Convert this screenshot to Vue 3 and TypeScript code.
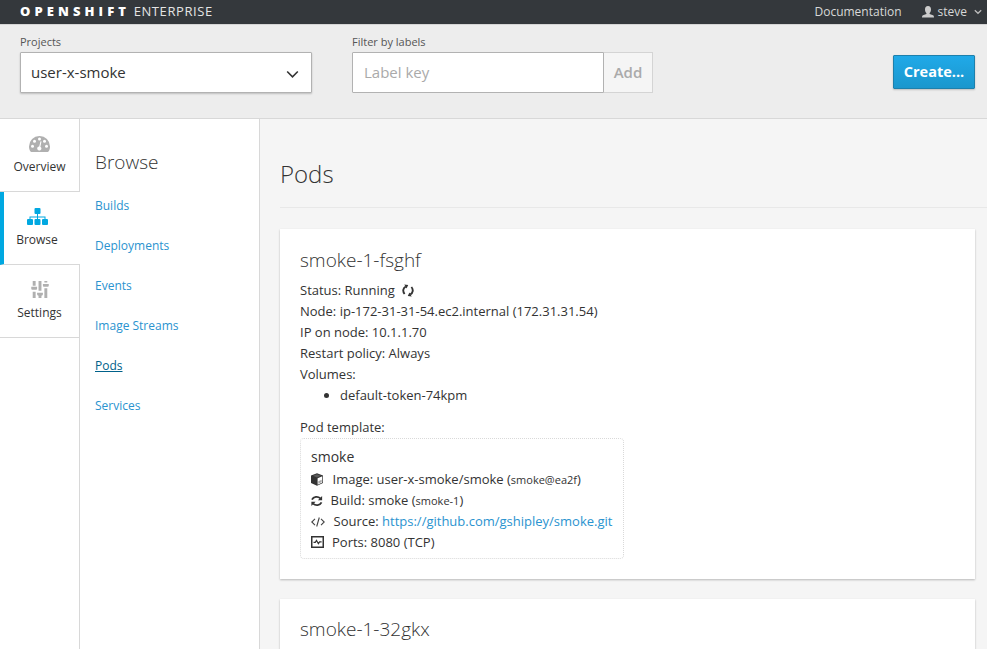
<script setup lang="ts">
interface NavItem {
  id: string
  label: string
}

const sections: NavItem[] = [
  { id: 'overview', label: 'Overview' },
  { id: 'browse', label: 'Browse' },
  { id: 'settings', label: 'Settings' },
]
const activeSection = 'browse'

const links: string[] = ['Builds', 'Deployments', 'Events', 'Image Streams', 'Pods', 'Services']
const activeLink = 'Pods'

const volumes: string[] = ['default-token-74kpm']
</script>

<template>
  <div class="console">
    <header class="topbar">
      <div class="brand"><strong>OPENSHIFT</strong><span>ENTERPRISE</span></div>
      <nav class="utility">
        <a class="docs">Documentation</a>
        <a class="user">
          <svg class="user-icon" viewBox="0 0 12 12" width="12" height="12">
            <path d="M6 0C3.900 0 3 1.400 3 3.400c0 1.800.7 2.900 1.400 3.600v1L1 9.300C.4 9.600 0 10.300 0 11.600h12c0-1.300-.4-2-1-2.300L7.600 8V7C8.300 6.300 9 5.200 9 3.400 9 1.400 8.100 0 6 0z" />
          </svg>
          <span>steve</span>
          <svg class="user-caret" viewBox="0 0 8 6" width="8" height="6">
            <path d="M.8 1.200 4 4.300l3.200-3.100" />
          </svg>
        </a>
      </nav>
    </header>

    <div class="toolbar">
      <div class="field projects">
        <label>Projects</label>
        <div class="select">
          <span>user-x-smoke</span>
          <svg viewBox="0 0 13 9" width="13" height="9"><path d="M1.200 1.500 6.500 6.800l5.300-5.300" /></svg>
        </div>
      </div>
      <div class="field filter">
        <label>Filter by labels</label>
        <div class="filter-row">
          <input type="text" placeholder="Label key" />
          <button class="add" disabled>Add</button>
        </div>
      </div>
      <button class="create">Create...</button>
    </div>

    <div class="body">
      <aside class="rail">
        <a v-for="s in sections" :key="s.id" class="rail-item" :class="{ active: s.id === activeSection }">
          <svg v-if="s.id === 'overview'" viewBox="0 0 21 16" width="21" height="16">
            <path fill="currentColor" d="M10.500 0A10.400 10.400 0 0 0 0 10.400C0 12.400.5 14 1.500 15.500c.2.300.4.500.8.500h16.400c.4 0 .6-.2.8-.5 1-1.500 1.500-3.100 1.500-5.100A10.400 10.400 0 0 0 10.500 0z" />
            <g fill="#fff">
              <circle cx="3.500" cy="10.200" r="1.500" /><circle cx="5.500" cy="5.200" r="1.500" />
              <circle cx="10.500" cy="3" r="1.500" /><circle cx="15.500" cy="5.200" r="1.500" />
              <circle cx="17.500" cy="10.200" r="1.500" />
              <path d="m11.500 5.200 1 .3-1.100 5.200a2.100 2.100 0 1 1-1.200-.3z" />
            </g>
          </svg>
          <svg v-else-if="s.id === 'browse'" viewBox="0 0 21 17" width="21" height="17">
            <g fill="currentColor">
              <rect x="7.500" width="6" height="6" rx="1" />
              <rect y="11" width="6" height="6" rx="1" /><rect x="7.500" y="11" width="6" height="6" rx="1" /><rect x="15" y="11" width="6" height="6" rx="1" />
              <path d="M10 5h1v3.500h7.500v3h-1v-2H11v2h-1v-2H3.500v2h-1v-3H10z" />
            </g>
          </svg>
          <svg v-else viewBox="0 0 18 17.500" width="18" height="17">
            <path fill="currentColor" d="M1.500 0h3v5h-3zM0 6h6v2q0 1-1 1H1q-1 0-1-1zM1.500 11h3v6.500h-3zM7.500 0h3v10h-3zM6 12h6v1.700q0 1.300-1.500 1.500v2.300h-3v-2.300Q6 15 6 13.700zM13.500 0h3v1.500h-3zM12 3h6v2q0 1-1 1h-4q-1 0-1-1zM13.500 7.500h3v10h-3z" />
          </svg>
          <span>{{ s.label }}</span>
        </a>
      </aside>

      <nav class="subnav">
        <h2>Browse</h2>
        <ul>
          <li v-for="l in links" :key="l"><a :class="{ current: l === activeLink }">{{ l }}</a></li>
        </ul>
      </nav>

      <main class="content">
        <h1>Pods</h1>
        <section class="card">
          <h3>smoke-1-fsghf</h3>
          <div class="line">
            Status: Running
            <svg class="status-icon" viewBox="0 0 12 13" width="12" height="13">
              <g fill="none" stroke="#333" stroke-width="1.900"><path d="M2.600 10C.5 7.500.8 4.200 3.800 2.500" /><path d="M9.400 3c2.100 2.500 1.800 5.800-1.200 7.500" /></g>
              <path fill="#333" d="M2.300.4 6.200.9 4.600 4.600zM9.700 12.600l-3.900-.5 1.600-3.700z" />
            </svg>
          </div>
          <div class="line">Node: ip-172-31-31-54.ec2.internal (172.31.31.54)</div>
          <div class="line">IP on node: 10.1.1.70</div>
          <div class="line">Restart policy: Always</div>
          <div class="line">Volumes:</div>
          <ul class="volumes"><li v-for="v in volumes" :key="v">{{ v }}</li></ul>
          <div class="line">Pod template:</div>
          <div class="template">
            <div class="template-name">smoke</div>
            <div class="row image">
              <svg viewBox="0 0 12 13" width="12" height="13">
                <path fill="#333" d="M6 .3 12 2.500v7.400l-6 2.900-6-2.900V2.500z" />
                <path fill="#fff" d="M6 1.300 10 2.800 6 4.400 2 2.800z" opacity=".2" />
                <path fill="#fff" d="m6.600 5.300 4.700-2v6.100l-4.700 2.300z" />
                <path fill="#aaa" d="m7.300 8.200 3.400-1.500v2.300l-3.400 1.700z" />
              </svg>
              <span>Image: user-x-smoke/smoke (<small>smoke@ea2f</small>)</span>
            </div>
            <div class="row build">
              <svg viewBox="0 0 12 12" width="11.500" height="12">
                <g fill="none" stroke="#333" stroke-width="1.900"><path d="M1 4.500C2.600 1.200 7.300.9 9.800 3.300" /><path d="M11 7.500c-1.600 3.300-6.300 3.600-8.800 1.200" /></g>
                <path fill="#333" d="M11.600.8v4.400H7.200zM.4 11.200V6.800h4.400z" />
              </svg>
              <span>Build: smoke (<small>smoke-1</small>)</span>
            </div>
            <div class="row source">
              <svg viewBox="0 0 14 10" width="14" height="10">
                <path fill="none" stroke="#444" stroke-width="1.100" d="M4 1.800.8 5 4 8.200M10 1.800 13.200 5 10 8.200M8.300.5l-2.600 9" />
              </svg>
              <span>Source: <a>https://github.com/gshipley/smoke.git</a></span>
            </div>
            <div class="row ports">
              <svg viewBox="0 0 13 13" width="13" height="13">
                <rect x=".75" y=".75" width="11.500" height="10.500" fill="none" stroke="#333" stroke-width="1.500" />
                <path fill="none" stroke="#333" stroke-width="1.200" d="M2.500 6.300h1.800l1.200-1.800 1.900 3.200 1.200-1.800h2" />
              </svg>
              <span>Ports: 8080 (TCP)</span>
            </div>
          </div>
        </section>
        <section class="card">
          <h3>smoke-1-32gkx</h3>
        </section>
      </main>
    </div>
  </div>
</template>

<style>
body {
  overflow: hidden;
}
</style>

<style scoped>
.console {
  height: 649px;
  overflow: hidden;
  display: flex;
  flex-direction: column;
  font-family: 'Open Sans', sans-serif;
  font-size: 13px;
  line-height: 21px;
  color: #333;
  background: #f5f5f5;
}
.console * {
  box-sizing: border-box;
}
.topbar {
  flex: none;
  height: 25px;
  border-bottom: 1px solid #d5d5d5;
  background: #34383c;
  color: #fff;
  display: flex;
  justify-content: space-between;
  padding: 0 5px 0 20px;
  line-height: 23px;
}
.brand {
  display: flex;
  line-height: 22px;
}
.brand strong {
  font-weight: 800;
  font-size: 13px;
  letter-spacing: 4.100px;
  margin-right: 3.500px;
}
.brand span {
  font-size: 13px;
  letter-spacing: 0.6px;
  color: #e4e4e4;
}
.utility {
  display: flex;
  color: #d8d8d8;
  font-size: 12px;
}
.docs {
  margin-right: 20px;
}
.user {
  display: flex;
  align-items: center;
  height: 23px;
}
.user-icon {
  fill: #ccc;
  margin-right: 4px;
}
.user-caret {
  margin-left: 7px;
  fill: none;
  stroke: #bbb;
  stroke-width: 1.300;
}
.toolbar {
  flex: none;
  height: 94px;
  border-bottom: 1px solid #d8d8d8;
  background: #ededed;
  display: flex;
  padding: 8px 12px 0 20px;
}
.field {
  display: flex;
  flex-direction: column;
}
label {
  font-size: 11px;
  line-height: 18px;
  height: 19px;
  color: #555;
}
.projects {
  width: 292px;
  margin-right: 40px;
}
.select {
  height: 41px;
  border: 1px solid #b2b2b2;
  border-radius: 1px;
  background: #fff;
  box-shadow: 0 1px 2px rgba(0, 0, 0, 0.2);
  display: flex;
  align-items: center;
  justify-content: space-between;
  padding: 0 12px 0 10px;
  font-size: 15px;
}
.select span {
  line-height: 38px;
  height: 39px;
}
.select svg {
  margin-top: 4px;
  fill: none;
  stroke: #333;
  stroke-width: 1.600;
}
.filter-row {
  display: flex;
}
input {
  width: 252px;
  height: 41px;
  border: 1px solid #b2b2b2;
  border-radius: 1px 0 0 1px;
  background: #fff;
  padding: 0 11px 2px;
  font: 15px 'Open Sans', sans-serif;
}
input::placeholder {
  color: #aaa;
}
.add {
  width: 49px;
  height: 41px;
  border: 1px solid #d4d4d4;
  border-left: 0;
  background: #f5f5f5;
  padding: 0 0 2px;
  color: #aaa;
  font: 600 15px 'Open Sans', sans-serif;
}
.create {
  margin: 22px 0 0 auto;
  width: 82px;
  height: 34px;
  padding: 0 0 2px;
  border: 1px solid #1d80ac;
  border-radius: 1px;
  background: linear-gradient(#20a9e8, #1b97cd);
  box-shadow: 0 1px 2px rgba(0, 0, 0, 0.2);
  color: #fff;
  font: 700 14.500px 'Open Sans', sans-serif;
}
.body {
  flex: 1;
  min-height: 0;
  display: flex;
}
.rail {
  width: 80px;
  background: #fff linear-gradient(#d8d8d8, #d8d8d8) right top / 1px 100% no-repeat;
}
.rail-item {
  height: 73px;
  border-bottom: 1px solid #d8d8d8;
  display: flex;
  flex-direction: column;
  align-items: center;
  justify-content: flex-end;
  padding: 0 1px 16px 0;
  color: #b0b0b0;
  font-size: 12px;
}
.rail-item span {
  color: #333;
  line-height: 17px;
  margin-top: 6px;
}
.rail-item.active {
  border-left: 4px solid #00a8e1;
  background: #fff;
  color: #00a8e1;
  padding-right: 10px;
}
.subnav {
  width: 180px;
  background: #fff;
  border-right: 1px solid #d8d8d8;
  padding: 30px 15px 0;
}
h1,
h2,
h3 {
  margin: 0;
  font-weight: 300;
}
h2 {
  font-size: 19px;
  line-height: 26px;
}
.subnav ul {
  list-style: none;
  margin: 11px 0 0;
  padding: 0;
  font-size: 12px;
}
.subnav li {
  height: 40px;
  line-height: 40px;
}
a {
  color: inherit;
}
.subnav a,
.source a {
  color: #2a93cf;
}
.subnav a.current {
  color: #00618a;
  text-decoration: underline;
}
.content {
  flex: 1;
  padding: 40px 12px 0 20px;
}
h1 {
  font-size: 24px;
  line-height: 30px;
  padding-bottom: 18px;
  border-bottom: 1px solid #e8e8e8;
  margin: 0 -12px 21px 0;
}
.card {
  height: 350px;
  background: #fff;
  box-shadow: 0 1px 2px rgba(0, 0, 0, 0.25);
  padding: 18px 20px 0;
  margin-bottom: 20px;
}
.card + .card {
  padding-top: 17px;
}
h3 {
  font-size: 19px;
  line-height: 26px;
  margin-bottom: 7px;
}
.status-icon {
  margin-left: 4px;
  vertical-align: -2px;
}
.volumes {
  margin: 0 0 11px;
  padding-left: 40px;
}
.template {
  width: 324px;
  height: 121px;
  border: 1px dotted #d9d9d9;
  border-radius: 4px;
  padding: 7px 10px;
}
.template-name {
  font-size: 14px;
  line-height: 21px;
  margin-bottom: 2px;
}
.row {
  height: 21px;
  display: flex;
  align-items: center;
}
.row svg {
  flex: none;
}
.row span {
  white-space: nowrap;
}
.image svg {
  margin-right: 9.500px;
}
.build svg {
  margin-right: 8px;
}
.source svg {
  margin-right: 8.500px;
}
.ports svg {
  margin-right: 8px;
}
small {
  font-size: 11px;
}
</style>
